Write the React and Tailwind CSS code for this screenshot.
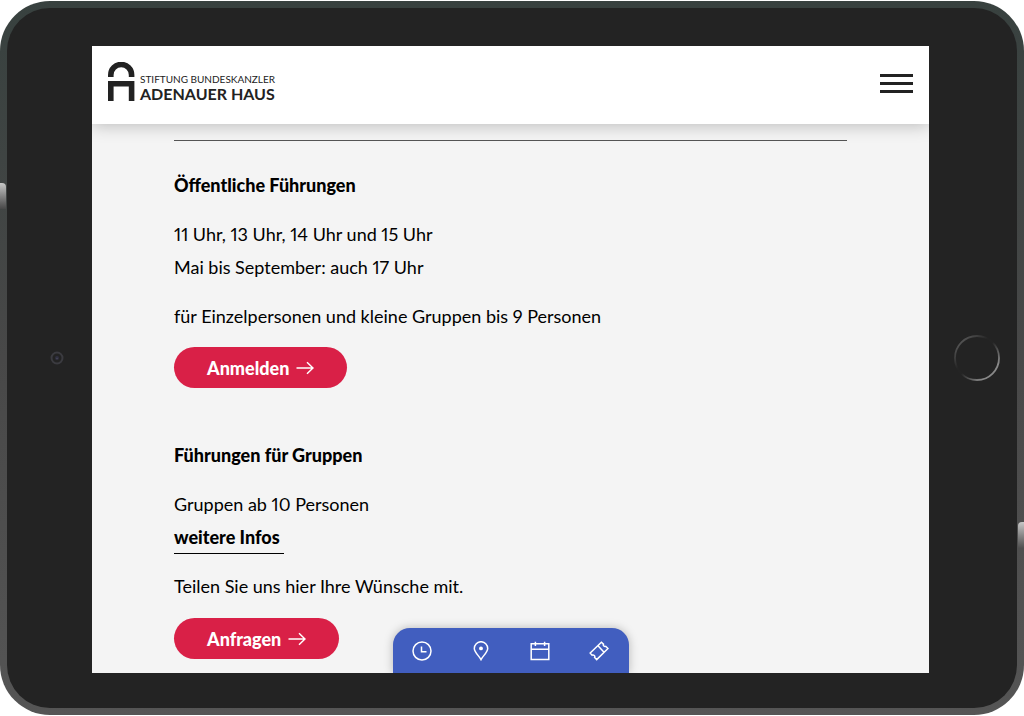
import React from 'react';

/**
 * Rounded red call-to-action link with arrow
 */
const ActionLink = ({ href, children }) => (
  <a
    href={href}
    className="inline-flex h-[41px] items-center gap-[7px] rounded-full bg-[#d92047] px-[33px] font-['Lato',sans-serif] text-[18px] font-black text-white"
  >
    <span className="pt-[2px]">{children}</span>
    <svg width="18" height="14" viewBox="0 0 18 14" fill="none" stroke="currentColor" strokeWidth="1.5" aria-hidden="true">
      <path d="M0.5 7H17M11 1.3L17 7L11 12.7" />
    </svg>
  </a>
);

const Logo = () => (
  <a href="#start" className="flex items-end gap-[5px] text-[#222222]">
    <svg width="27" height="40" viewBox="0 0 27 40" fill="currentColor" aria-hidden="true">
      <path d="M0 15V12.9a13.2 13.2 0 0 1 26.4 0V15h-5.6v-2.1a7.6 7.6 0 0 0-15.2 0V15z" />
      <path d="M0 19h26.4v20h-5.6V24.4H5.6V39H0z" />
    </svg>
    <span className="flex flex-col whitespace-nowrap">
      <span className="text-[10px] leading-[13px]">STIFTUNG BUNDESKANZLER</span>
      <span className="text-[16px] leading-[16px] font-bold">ADENAUER HAUS</span>
    </span>
  </a>
);

const Header = () => (
  <header className="relative flex h-[78px] items-center justify-between bg-white px-4 pb-[6px] shadow-[0_1px_16px_rgba(0,0,0,0.25)]">
    <Logo />
    <button type="button" aria-label="Menü" className="flex w-[33px] flex-col gap-[5px] pt-[3px]">
      <span className="h-[3px] w-full bg-[#222222]" />
      <span className="h-[3px] w-full bg-[#222222]" />
      <span className="h-[3px] w-full bg-[#222222]" />
    </button>
  </header>
);

const quickLinks = [
  {
    label: 'Öffnungszeiten',
    href: '#zeiten',
    icon: (
      <>
        <circle cx="10" cy="10" r="9" />
        <path d="M9.5 5.5V10.8H14.5" />
      </>
    ),
  },
  {
    label: 'Anfahrt',
    href: '#anfahrt',
    icon: (
      <>
        <path d="M10 18.6C8.5 15.6 3.3 11 3.3 7.4a6.7 6.7 0 0 1 13.4 0C16.7 11 11.5 15.6 10 18.6z" />
        <circle cx="10" cy="7.4" r="1.2" fill="currentColor" />
      </>
    ),
  },
  {
    label: 'Kalender',
    href: '#kalender',
    icon: <path d="M1.2 2.8H18.8V18.4H1.2zM1.2 8.3H18.8M5.4 0.8V5M14.6 0.8V5" />,
  },
  {
    label: 'Tickets',
    href: '#tickets',
    icon: (
      <path d="M1.2 12L12.4 1.2L14.5 3.2C13.8 4.4 15.4 6 16.8 5.3L19 7.5L7.7 18.6L5.6 16.5C6.4 15.2 4.7 13.4 3.2 14.2ZM9 4.8L14.8 11" />
    ),
  },
];

const QuickBar = () => (
  <nav
    aria-label="Schnellzugriff"
    className="absolute bottom-0 left-1/2 flex h-[45px] w-[236px] -translate-x-1/2 justify-around rounded-t-[17px] bg-[#415ebf] text-white shadow-[0_0_10px_rgba(0,0,0,0.25)]"
  >
    {quickLinks.map(link => (
      <a key={link.label} href={link.href} aria-label={link.label} className="flex items-center">
        <svg width="20" height="20" viewBox="0 0 20 20" fill="none" stroke="currentColor" strokeWidth="1.5">
          {link.icon}
        </svg>
      </a>
    ))}
  </nav>
);

const Screen = () => (
  <div className="relative overflow-hidden bg-[#f4f4f4] font-['Lato',sans-serif] text-black">
    <Header />
    <main className="px-[82px] pt-4 pb-[14px] text-[18px] leading-[33px] proportional-nums">
      <hr className="mb-7 border-[#555555]" />

      <section className="mb-[51px]">
        <h2 className="mb-4 font-black">Öffentliche Führungen</h2>
        <p className="mb-4">
          11 Uhr, 13 Uhr, 14 Uhr und 15 Uhr
          <br />
          Mai bis September: auch 17 Uhr
        </p>
        <p className="mb-[14px]">für Einzelpersonen und kleine Gruppen bis 9 Personen</p>
        <div className="flex">
          <ActionLink href="#anmelden">Anmelden</ActionLink>
        </div>
      </section>

      <section>
        <h2 className="mb-4 font-black">Führungen für Gruppen</h2>
        <p>Gruppen ab 10 Personen</p>
        <div className="mb-4 flex">
          <a href="#infos" className="border-b border-black pr-1 leading-[32px] font-black">weitere Infos</a>
        </div>
        <p className="mb-[15px]">Teilen Sie uns hier Ihre Wünsche mit.</p>
        <div className="flex">
          <ActionLink href="#anfragen">Anfragen</ActionLink>
        </div>
      </section>
    </main>
    <QuickBar />
  </div>
);

const Camera = () => (
  <svg width="14" height="14" viewBox="0 0 14 14" fill="none" aria-hidden="true">
    <circle cx="7" cy="7" r="5.5" stroke="#3b3b40" strokeWidth="2" />
    <circle cx="7" cy="7" r="2" fill="#303040" />
    <circle cx="7" cy="7.5" r="0.8" fill="#4a4a58" />
  </svg>
);

const HomeButton = () => (
  <svg width="48" height="48" viewBox="0 0 48 48" fill="none" strokeWidth="1.8" aria-hidden="true">
    <defs>
      <linearGradient id="homeRing" x1="0" y1="0" x2="1" y2="1">
        <stop offset="0" stopColor="#6a6a6a" />
        <stop offset="0.4" stopColor="#242424" />
        <stop offset="0.5" stopColor="#242424" />
        <stop offset="0.8" stopColor="#888888" />
      </linearGradient>
    </defs>
    <circle cx="24" cy="24" r="22" stroke="url(#homeRing)" />
  </svg>
);

export default function App() {
  return (
    <div className="bg-white py-px">
      <div className="relative overflow-hidden rounded-[50px] bg-linear-to-b from-[#38413f] via-[#484848] to-[#555555] p-[7px]">
        <span className="absolute top-[182px] left-0 h-[26px] w-[6px] rounded-tr-sm bg-linear-to-b from-[#c8c8c8] to-[#484848]" />
        <span className="absolute top-[521px] right-0 h-[26px] w-[6px] rounded-tl-sm bg-linear-to-b from-[#c8c8c8] to-[#505050]" />
        <div className="flex items-center rounded-[43px] bg-[#232323] pt-[38px] pb-[35px]">
          <div className="flex w-[85px] shrink-0 justify-center pb-1 pl-[14px]">
            <Camera />
          </div>
          <div className="min-w-0 flex-1">
            <Screen />
          </div>
          <div className="flex w-[88px] shrink-0 justify-center pb-1 pl-[8px]">
            <HomeButton />
          </div>
        </div>
      </div>
    </div>
  );
}
